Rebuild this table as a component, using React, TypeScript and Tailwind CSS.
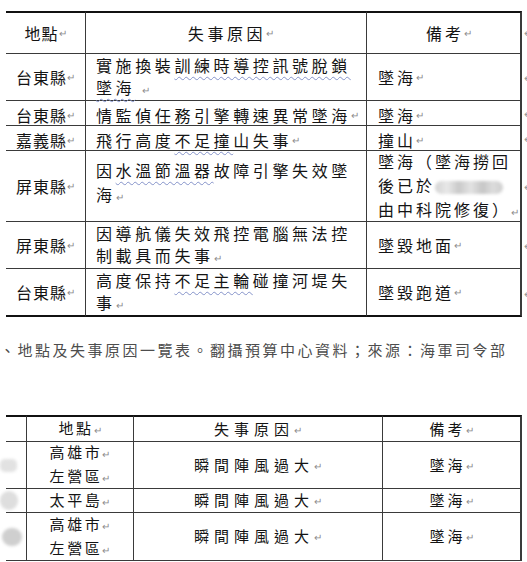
import React from "react";

const M = () => <span className="text-[10px] text-[#8c8c8c] tracking-normal">↵</span>;

const W = ({ children }: { children: React.ReactNode }) => (
  <span className="underline decoration-wavy decoration-[#8593c9] decoration-1 underline-offset-[4px]">{children}</span>
);

const base = "border-b border-[#3a3a3a]";
const c1 = `flex items-center justify-center border-r ${base} text-[16px] tracking-[1px] leading-[22px]`;
const c2 = `flex items-center pl-[10px] border-r ${base} text-[16px] tracking-[3.6px] leading-[22px] whitespace-nowrap`;
const c3 = `flex items-center pl-[11px] border-r-2 ${base} text-[16px] tracking-[3px] leading-[24px] whitespace-nowrap`;
const mk = "flex items-center pl-[2px] text-[11px] text-[#9a9a9a]";
const short = " pt-[3px] leading-[20px]";

const b0 = `flex items-center border-r ${base}`;
const b1 = `flex flex-col items-center justify-center border-r ${base} text-[15px] tracking-[2.6px] leading-[22px]`;
const b2 = `flex items-center justify-center border-r ${base} text-[15px] tracking-[5px]`;
const b3 = `flex items-center justify-center border-r-2 ${base} text-[15px] tracking-[3px]`;
const top = " border-t-2 border-t-[#111]";

const Blur = () => (
  <span className="inline-block align-middle w-[68px] h-[13px] rounded-full blur-[1.5px] bg-[linear-gradient(90deg,#d3d3d3,#e8e8e8_18%,#c9c9c9_35%,#e3e3e3_52%,#c6c6c6_70%,#dcdcdc_85%,#cfcfcf)]" />
);

export default function App() {
  return (
    <div className="w-[527px] h-[562px] overflow-hidden bg-white text-[#141414] font-['Noto_Sans_CJK_TC','Noto_Sans_CJK_SC',sans-serif]">
      {/* 第一張表 */}
      <div className="ml-[6px] pt-[11px] grid grid-cols-[80px_281px_155px_1fr] grid-rows-[43px_47px_25px_25px_71px_47px_48px]">
        <div className={c1 + top}>地點<M /></div>
        <div className={c2 + top + " justify-center pl-0 tracking-[3.4px]"}>失事原因<M /></div>
        <div className={c3 + top + " justify-center pl-0"}>備考<M /></div>
        <div className={mk}>↵</div>

        <div className={c1}>台東縣<M /></div>
        <div className={c2 + " leading-[21px]"}>
          <div>
            實施換裝<W>訓練時導控訊號脫鎖</W>
            <br />
            <W>墜海</W> <M />
          </div>
        </div>
        <div className={c3}>墜海<M /></div>
        <div className={mk}>↵</div>

        <div className={c1 + short}>台東縣<M /></div>
        <div className={c2 + short}>情監偵任務引擎轉速異常墜海<M /></div>
        <div className={c3 + short}>墜海<M /></div>
        <div className={mk}>↵</div>

        <div className={c1 + short}>嘉義縣<M /></div>
        <div className={c2 + short}>飛行高度<W>不足撞</W>山失事<M /></div>
        <div className={c3 + short}>撞山<M /></div>
        <div className={mk}>↵</div>

        <div className={c1}>屏東縣<M /></div>
        <div className={c2 + " leading-[24px] pb-[6px]"}>
          <div>
            因<W>水溫節溫器</W>故障引擎失效墜
            <br />
            海<M />
          </div>
        </div>
        <div className={c3 + " tracking-[2.6px] leading-[23px]"}>
          <div>
            墜海（墜海撈回
            <br />
            後已於<Blur />
            <br />
            由中科院修復）<M />
          </div>
        </div>
        <div className={mk}>↵</div>

        <div className={c1}>屏東縣<M /></div>
        <div className={c2}>
          <div>
            因導航儀失效飛控電腦無法控
            <br />
            制載具而失事<M />
          </div>
        </div>
        <div className={c3}>墜毀地面<M /></div>
        <div className={mk}>↵</div>

        <div className={c1 + " border-b-2 border-b-[#111]"}>台東縣<M /></div>
        <div className={c2 + " border-b-2 border-b-[#111]"}>
          <div>
            高度保持<W>不足主輪</W>碰撞河堤失
            <br />
            事<M />
          </div>
        </div>
        <div className={c3 + " border-b-2 border-b-[#111]"}>墜毀跑道<M /></div>
        <div className={mk}>↵</div>
      </div>

      {/* 圖說 */}
      <p className="mt-[23px] text-[15px] leading-[20px] tracking-[2.5px] text-[#4d4d4d] whitespace-nowrap">
        、地點及失事原因一覽表。翻攝預算中心資料；來源：海軍司令部
      </p>

      {/* 第二張表 */}
      <div className="ml-[6px] mt-[55px] w-[516px] grid grid-cols-[21px_107px_249px_139px] grid-rows-[27px_47px_24px_48px]">
        <div className={b0 + top}></div>
        <div className={b1 + top}><div>地點<M /></div></div>
        <div className={b2 + top}>失事原因<M /></div>
        <div className={b3 + top}>備考<M /></div>

        <div className={b0}>
          <div className="-ml-[6px] w-[17px] h-[13px] rounded-[5px] bg-[#e2e2e2] blur-[1.5px]" />
        </div>
        <div className={b1}>
          <div>高雄市<M /></div>
          <div>左營區<M /></div>
        </div>
        <div className={b2}>瞬間陣風過大<M /></div>
        <div className={b3}>墜海<M /></div>

        <div className={b0}>
          <div className="-ml-[6px] w-[18px] h-[19px] rounded-full bg-[#dedede] blur-[1.5px]" />
        </div>
        <div className={b1}><div>太平島<M /></div></div>
        <div className={b2}>瞬間陣風過大<M /></div>
        <div className={b3}>墜海<M /></div>

        <div className={b0}>
          <div className="-ml-[4px] w-[20px] h-[18px] rounded-full bg-[#cfcfcf] blur-[1.5px]" />
        </div>
        <div className={b1}>
          <div>高雄市<M /></div>
          <div>左營區<M /></div>
        </div>
        <div className={b2}>瞬間陣風過大<M /></div>
        <div className={b3}>墜海<M /></div>
      </div>
    </div>
  );
}
